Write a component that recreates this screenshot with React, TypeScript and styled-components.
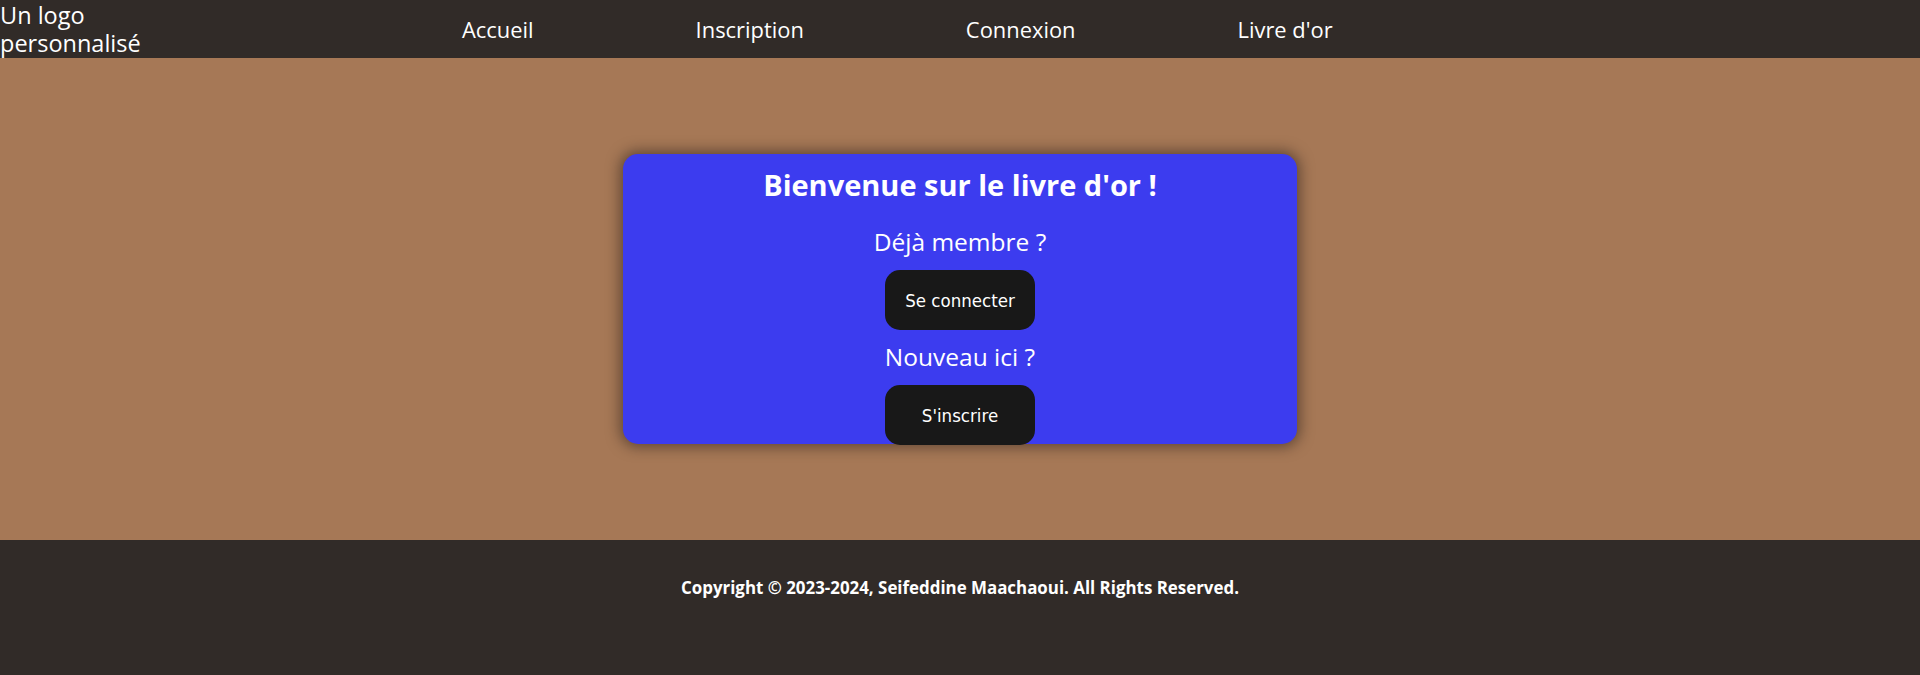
import React from "react";
import styled, { createGlobalStyle } from "styled-components";

const GlobalStyle = createGlobalStyle`
  html, body {
    margin: 0;
    padding: 0;
    background: #a67856;
  }
  body {
    font-family: "Open Sans", "Noto Sans", sans-serif;
    color: #ffffff;
  }
  * { box-sizing: border-box; }
`;

const Page = styled.div`
  display: flex;
  flex-direction: column;
  min-height: 675px;
`;

const Header = styled.header`
  height: 58px;
  background: #312b28;
  display: flex;
  align-items: center;
`;

const Logo = styled.div`
  width: 150px;
  display: flex;
  flex-direction: column;
  color: #ffffff;
`;

const LogoLine = styled.span`
  display: block;
  height: 28px;
  font-size: 23.5px;
  line-height: 28px;
  overflow: visible;
  white-space: nowrap;
`;

const NavList = styled.ul`
  list-style: none;
  margin: 0 0 0 312px;
  padding: 0;
  display: flex;
  gap: 162px;
`;

const NavLink = styled.a`
  color: #ffffff;
  text-decoration: none;
  font-size: 21.9px;
`;

const Main = styled.main`
  height: 482px;
  display: flex;
  align-items: center;
  justify-content: center;
`;

const Card = styled.section`
  width: 674px;
  height: 290px;
  background: #3c3cef;
  border-radius: 15px;
  box-shadow: 0 0 14px 3px rgba(40, 30, 25, 0.55);
  display: flex;
  flex-direction: column;
  align-items: center;
`;

const Title = styled.h1`
  margin: 11px 0 0;
  font-size: 29px;
  font-weight: 700;
  line-height: 40px;
`;

const Question = styled.p<{ $top: number }>`
  margin: ${(p) => p.$top}px 0 0;
  font-size: 24.5px;
  line-height: 32px;
`;

const ActionButton = styled.button`
  margin-top: 12px;
  flex-shrink: 0;
  width: 150px;
  height: 60px;
  border: none;
  border-radius: 15px;
  background: #181818;
  color: #ffffff;
  font-family: "DejaVu Sans Condensed", "DejaVu Sans", sans-serif;
  font-size: 18.5px;
  cursor: pointer;
`;

const Footer = styled.footer`
  height: 135px;
  background: #312b28;
  display: flex;
  justify-content: center;
  padding-top: 37px;
`;

const Copyright = styled.p`
  margin: 0;
  font-size: 16.9px;
  font-weight: 700;
  line-height: 22px;
`;

export default function App() {
  return (
    <>
      <GlobalStyle />
      <Page>
        <Header>
          <Logo>
            <LogoLine>Un logo</LogoLine>
            <LogoLine>personnalisé</LogoLine>
          </Logo>
          <nav>
            <NavList>
              <li><NavLink href="#">Accueil</NavLink></li>
              <li><NavLink href="#">Inscription</NavLink></li>
              <li><NavLink href="#">Connexion</NavLink></li>
              <li><NavLink href="#">Livre d'or</NavLink></li>
            </NavList>
          </nav>
        </Header>
        <Main>
          <Card>
            <Title>Bienvenue sur le livre d'or !</Title>
            <Question $top={21}>Déjà membre ?</Question>
            <ActionButton>Se connecter</ActionButton>
            <Question $top={11}>Nouveau ici ?</Question>
            <ActionButton>S'inscrire</ActionButton>
          </Card>
        </Main>
        <Footer>
          <Copyright>Copyright © 2023-2024, Seifeddine Maachaoui. All Rights Reserved.</Copyright>
        </Footer>
      </Page>
    </>
  );
}
